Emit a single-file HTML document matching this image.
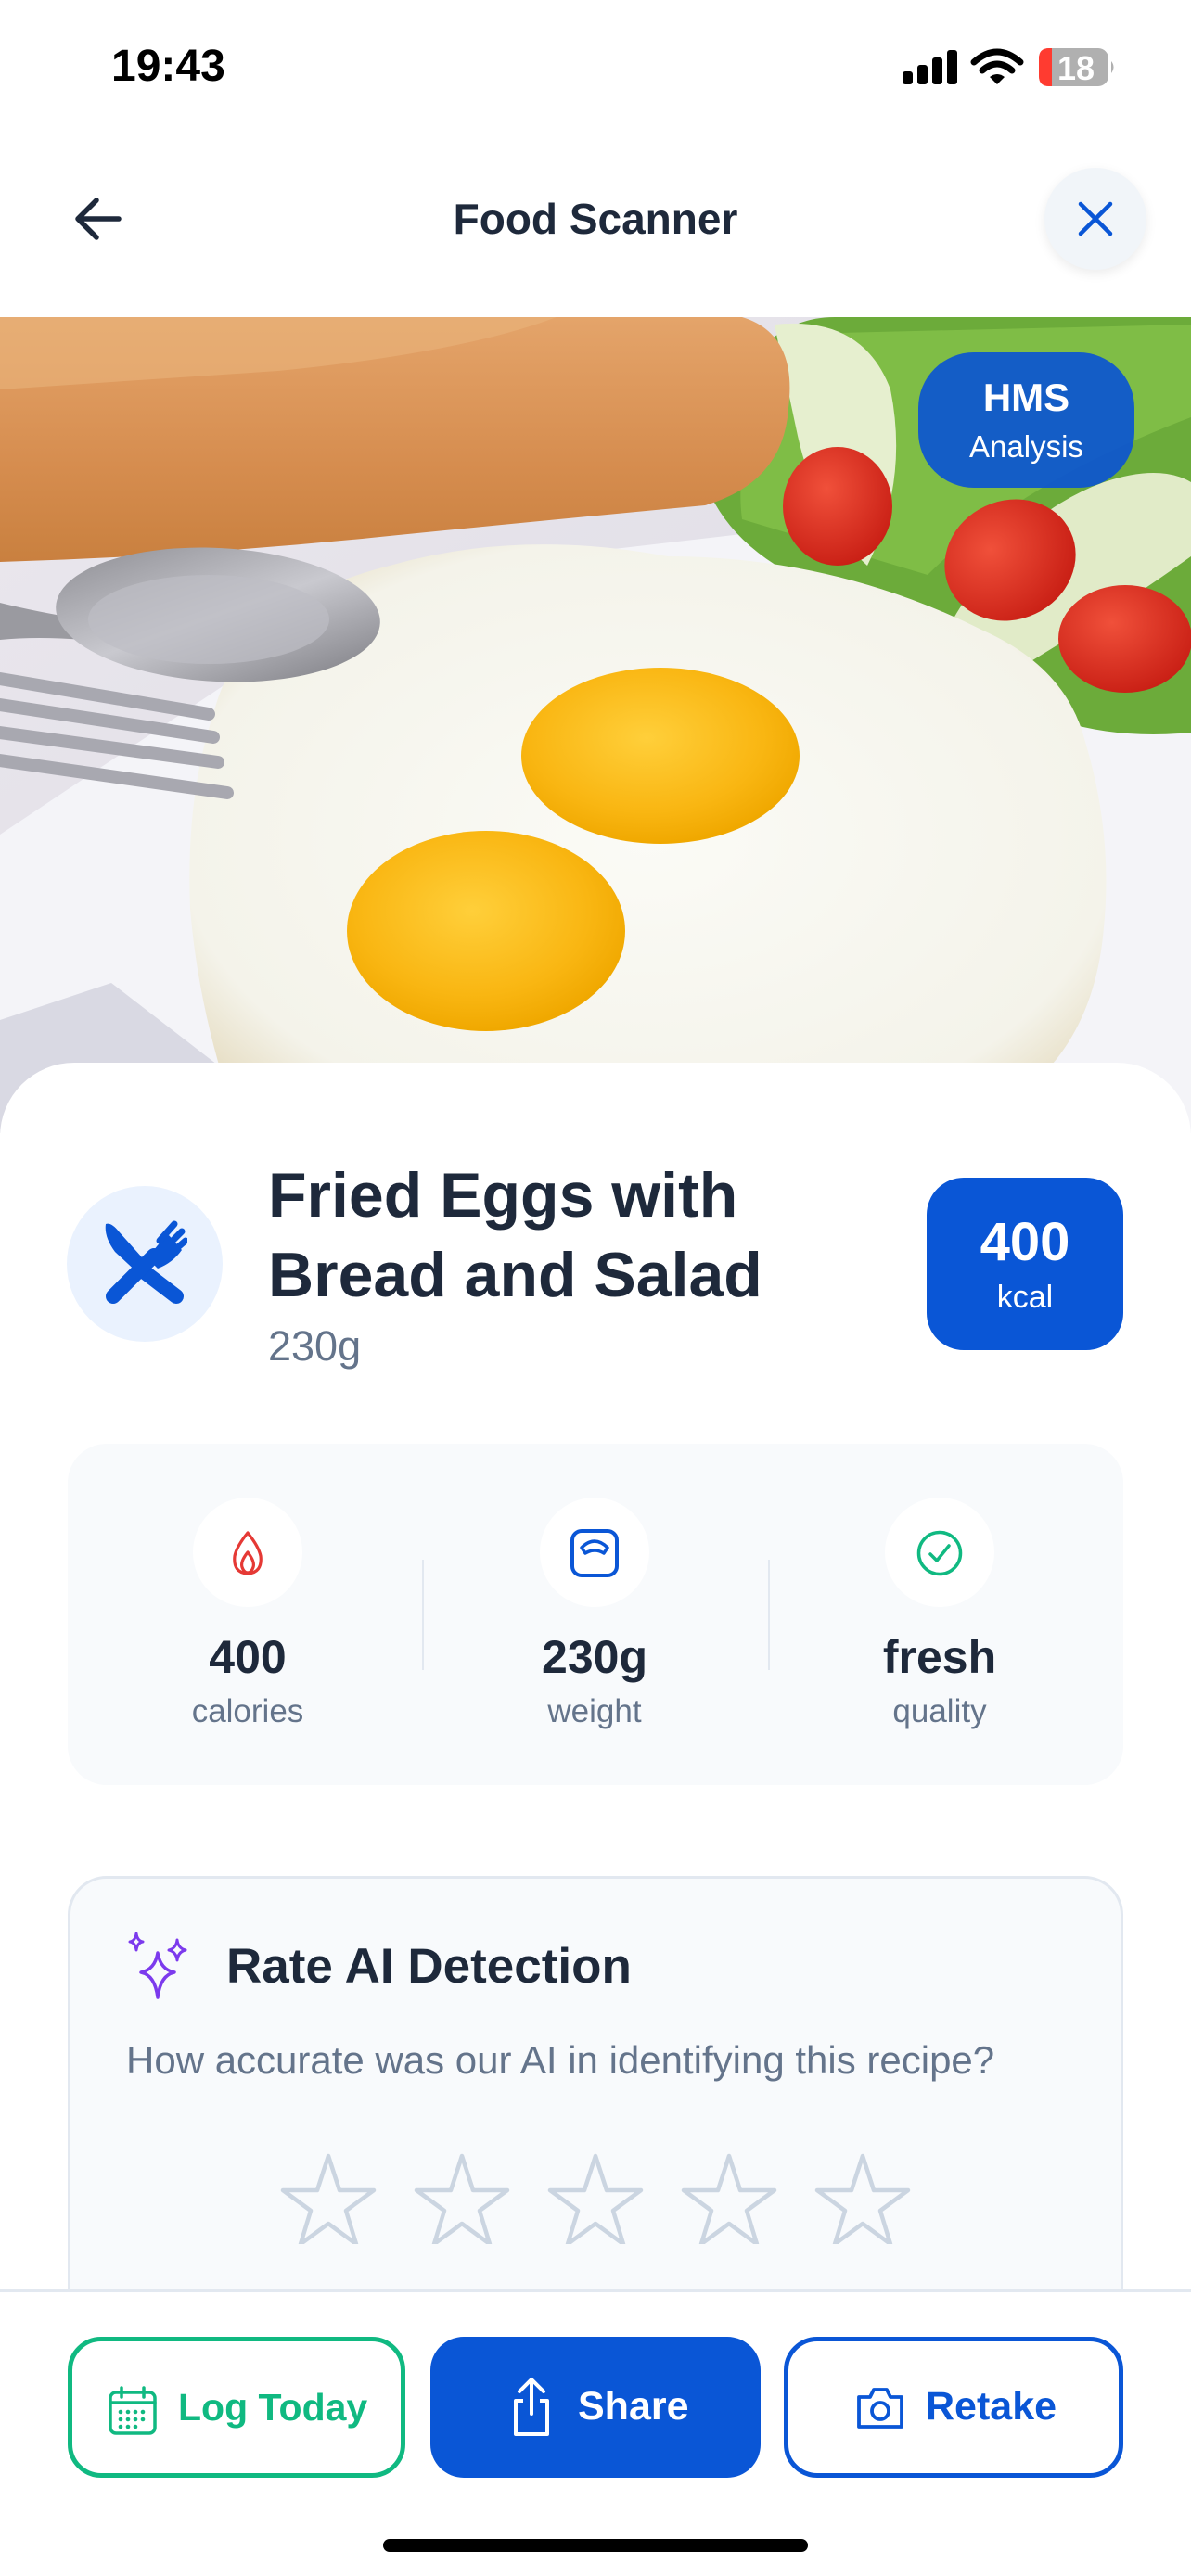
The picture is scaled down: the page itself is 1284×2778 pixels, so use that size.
<!DOCTYPE html>
<html><head><meta charset="utf-8">
<style>
*{margin:0;padding:0;box-sizing:border-box}
body{width:1284px;height:2778px;position:relative;overflow:hidden;background:#fff;font-family:"Liberation Sans",sans-serif;color:#1e293b}
.a{position:absolute}
.t{white-space:nowrap}
</style></head><body>

<!-- status bar -->
<div class="a t" style="left:120px;top:44px;font-size:48px;font-weight:700;color:#000">19:43</div>
<svg class="a" style="left:970px;top:50px" width="240" height="46" viewBox="970 50 240 46">
  <rect x="973" y="77" width="11" height="14" rx="3"/>
  <rect x="989" y="70" width="11" height="21" rx="3"/>
  <rect x="1005" y="62" width="11" height="29" rx="3"/>
  <rect x="1021" y="54" width="11" height="37" rx="3"/>
  <path d="M1050 67 Q1075 45 1100 67" stroke="#000" stroke-width="7" fill="none" stroke-linecap="round"/>
  <path d="M1059 76 Q1075 62 1091 76" stroke="#000" stroke-width="7" fill="none" stroke-linecap="round"/>
  <path d="M1067 83 L1075 91 L1083 83 Q1075 77 1067 83Z"/>
  <rect x="1120" y="52" width="75" height="41" rx="11" fill="#b0b0b0"/>
  <path d="M1131 52 H1134 V93 H1131 Q1120 93 1120 82 V63 Q1120 52 1131 52Z" fill="#ff3b30"/>
  <path d="M1198 66 Q1203 72 1198 79Z" fill="#b0b0b0"/>
  <text x="1160" y="86" font-size="36" font-weight="700" fill="#fff" text-anchor="middle" font-family="Liberation Sans">18</text>
</svg>

<!-- nav -->
<svg class="a" style="left:78px;top:210px" width="56" height="52" viewBox="0 0 56 52">
  <path d="M50 26 H6 M26 6 L6 26 L26 46" stroke="#1e293b" stroke-width="5.5" fill="none" stroke-linecap="round" stroke-linejoin="round"/>
</svg>
<div class="a t" style="left:0;width:1284px;text-align:center;top:209px;font-size:46px;font-weight:700;color:#1e293b">Food Scanner</div>
<div class="a" style="left:1126px;top:181px;width:110px;height:110px;border-radius:55px;background:#f1f5f9;box-shadow:0 4px 12px rgba(0,0,0,0.08)"></div>
<svg class="a" style="left:1160px;top:215px" width="42" height="42" viewBox="0 0 42 42">
  <path d="M5 5 L37 37 M37 5 L5 37" stroke="#0a56d6" stroke-width="4.5" stroke-linecap="round"/>
</svg>

<!-- food photo -->
<svg class="a" style="left:0;top:342px" width="1284" height="880" viewBox="0 342 1284 880">
  <defs>
    <linearGradient id="bg" x1="0" y1="0" x2="1" y2="1">
      <stop offset="0" stop-color="#ece8ee"/><stop offset="1" stop-color="#d8d8e2"/>
    </linearGradient>
    <linearGradient id="bread" x1="0" y1="0" x2="0" y2="1">
      <stop offset="0" stop-color="#e4a46a"/><stop offset="0.6" stop-color="#d68d4f"/><stop offset="1" stop-color="#c9803f"/>
    </linearGradient>
    <radialGradient id="yolk" cx="0.45" cy="0.4" r="0.6">
      <stop offset="0" stop-color="#ffcf3a"/><stop offset="0.7" stop-color="#f9b612"/><stop offset="1" stop-color="#f0a800"/>
    </radialGradient>
    <radialGradient id="white" cx="0.5" cy="0.5" r="0.6">
      <stop offset="0" stop-color="#fbfbf6"/><stop offset="0.85" stop-color="#f4f3ea"/><stop offset="1" stop-color="#e8e0c8"/>
    </radialGradient>
    <radialGradient id="tom" cx="0.4" cy="0.35" r="0.7">
      <stop offset="0" stop-color="#f0503a"/><stop offset="1" stop-color="#c81e14"/>
    </radialGradient>
    <linearGradient id="spoon" x1="0" y1="0" x2="1" y2="1">
      <stop offset="0" stop-color="#8a8a90"/><stop offset="0.5" stop-color="#c9c9cf"/><stop offset="1" stop-color="#77777d"/>
    </linearGradient>
  </defs>
  <rect x="0" y="342" width="1284" height="880" fill="url(#bg)"/>
  <path d="M0 900 L420 620 L1284 520 L1284 1222 L0 1222Z" fill="#f4f4f8"/>
  <path d="M0 1100 L120 1060 L330 1222 L0 1222Z" fill="#d9d9e3"/>
  <path d="M760 520 Q740 440 800 400 Q840 342 900 342 L1284 342 L1284 790 Q1180 800 1100 760 Q980 700 900 640 Q790 600 760 520Z" fill="#6cab3a"/>
  <path d="M800 560 Q790 480 840 440 Q880 400 860 360 L1284 350 L1284 450 Q1100 520 1000 620 Z" fill="#85c24a" opacity="0.8"/>
  <path d="M835 350 Q930 340 960 420 Q980 520 935 610 Q880 560 860 470 Q845 400 835 350Z" fill="#e6efcf"/>
  <path d="M1010 700 Q1080 560 1190 520 Q1250 500 1284 520 L1284 600 Q1200 660 1100 720Z" fill="#e1ebc8"/>
  <ellipse cx="903" cy="546" rx="59" ry="64" fill="url(#tom)"/>
  <ellipse cx="1089" cy="604" rx="72" ry="64" fill="url(#tom)" transform="rotate(-25 1089 604)"/>
  <ellipse cx="1213" cy="689" rx="72" ry="58" fill="url(#tom)"/>
  <path d="M0 342 L800 342 Q860 360 850 440 Q845 520 760 545 Q600 560 400 580 Q200 600 0 606Z" fill="url(#bread)"/>
  <path d="M0 342 L600 342 Q500 380 300 400 Q150 410 0 420Z" fill="#eab47c" opacity="0.6"/>
  <path d="M230 770 Q260 650 420 610 Q560 570 720 600 Q900 600 1060 680 Q1150 720 1170 800 Q1200 900 1190 1000 Q1180 1120 1100 1180 L1000 1222 L260 1222 Q215 1100 205 980 Q200 860 230 770Z" fill="url(#white)"/>
  <ellipse cx="712" cy="815" rx="150" ry="95" fill="url(#yolk)"/>
  <ellipse cx="524" cy="1004" rx="150" ry="108" fill="url(#yolk)"/>
  <path d="M0 650 Q40 660 90 668 L90 690 Q40 686 0 690Z" fill="#9a9aa0"/>
  <ellipse cx="235" cy="663" rx="175" ry="72" fill="url(#spoon)" transform="rotate(3 235 663)"/>
  <ellipse cx="225" cy="668" rx="130" ry="48" fill="#bdbdc4" opacity="0.7"/>
  <g stroke="#a8a8b0" stroke-width="14" stroke-linecap="round">
    <path d="M0 732 L225 770"/><path d="M0 760 L230 795"/><path d="M0 790 L235 822"/><path d="M0 820 L245 855"/>
  </g>
</svg>
<div class="a" style="left:990px;top:380px;width:233px;height:146px;border-radius:60px;background:#0c55d0;opacity:0.93"></div>
<div class="a t" style="left:990px;width:233px;text-align:center;top:405px;font-size:42px;font-weight:700;color:#fff">HMS</div>
<div class="a t" style="left:990px;width:233px;text-align:center;top:463px;font-size:33px;color:#fff">Analysis</div>

<!-- card -->
<div class="a" style="left:0;top:1146px;width:1284px;height:1400px;background:#fff;border-radius:80px 80px 0 0"></div>

<div class="a" style="left:72px;top:1279px;width:168px;height:168px;border-radius:84px;background:#eaf2fe"></div>
<svg class="a" style="left:108px;top:1314px" width="94" height="94" viewBox="0 0 94 94">
  <!-- knife -->
  <path d="M6 6 Q4 20 16 36 L44 62 L54 52 L20 14 Q12 4 6 6Z" fill="#0a56d6"/>
  <path d="M48 58 L82 84" stroke="#0a56d6" stroke-width="16" stroke-linecap="round"/>
  <!-- fork -->
  <path d="M58 40 L14 84" stroke="#0a56d6" stroke-width="16" stroke-linecap="round"/>
  <path d="M52 44 Q60 28 74 18 L88 34 Q78 48 62 54Z" fill="#0a56d6"/>
  <path d="M64 24 L80 6 M72 30 L88 14 M78 36 L92 24" stroke="#0a56d6" stroke-width="7" stroke-linecap="round"/>
</svg>

<div class="a t" style="left:289px;top:1246px;font-size:68px;font-weight:700;color:#1e293b;line-height:86px">Fried Eggs with<br>Bread and Salad</div>
<div class="a t" style="left:289px;top:1426px;font-size:45px;color:#64748b">230g</div>

<div class="a" style="left:999px;top:1270px;width:212px;height:186px;border-radius:40px;background:#0a56d6"></div>
<div class="a t" style="left:999px;width:212px;text-align:center;top:1306px;font-size:58px;font-weight:700;color:#fff">400</div>
<div class="a t" style="left:999px;width:212px;text-align:center;top:1380px;font-size:34px;color:#fff">kcal</div>

<!-- stats -->
<div class="a" style="left:73px;top:1557px;width:1138px;height:368px;border-radius:42px;background:#f8fafc"></div>
<div class="a" style="left:208px;top:1615px;width:118px;height:118px;border-radius:59px;background:#fff"></div>
<div class="a" style="left:582px;top:1615px;width:118px;height:118px;border-radius:59px;background:#fff"></div>
<div class="a" style="left:954px;top:1615px;width:118px;height:118px;border-radius:59px;background:#fff"></div>
<svg class="a" style="left:247px;top:1650px" width="40" height="50" viewBox="0 0 40 50">
  <path d="M20 3 Q8 18 6 28 Q4 46 20 47 Q36 46 34 28 Q32 18 20 3Z M20 24 Q12 34 14 40 Q16 46 20 46 Q24 46 26 40 Q28 34 20 24Z" stroke="#e53935" stroke-width="3.2" fill="none" stroke-linejoin="round"/>
</svg>
<svg class="a" style="left:613px;top:1647px" width="56" height="56" viewBox="0 0 56 56">
  <rect x="4" y="4" width="48" height="48" rx="10" stroke="#0a56d6" stroke-width="4" fill="none"/>
  <path d="M14 22 Q28 8 42 22 L38 28 Q28 22 18 28Z" stroke="#0a56d6" stroke-width="3.5" fill="none" stroke-linejoin="round"/>
</svg>
<svg class="a" style="left:986px;top:1648px" width="54" height="54" viewBox="0 0 54 54">
  <circle cx="27" cy="27" r="22.5" stroke="#10b981" stroke-width="3.5" fill="none"/>
  <path d="M17 28 L24 35 L37 19" stroke="#10b981" stroke-width="3.5" fill="none" stroke-linecap="round" stroke-linejoin="round"/>
</svg>
<div class="a" style="left:455px;top:1682px;width:2px;height:119px;background:#e2e8f0"></div>
<div class="a" style="left:828px;top:1682px;width:2px;height:119px;background:#e2e8f0"></div>
<div class="a t" style="left:117px;width:300px;text-align:center;top:1758px;font-size:50px;font-weight:700">400</div>
<div class="a t" style="left:491px;width:300px;text-align:center;top:1758px;font-size:50px;font-weight:700">230g</div>
<div class="a t" style="left:863px;width:300px;text-align:center;top:1758px;font-size:50px;font-weight:700">fresh</div>
<div class="a t" style="left:117px;width:300px;text-align:center;top:1826px;font-size:35px;color:#64748b">calories</div>
<div class="a t" style="left:491px;width:300px;text-align:center;top:1826px;font-size:35px;color:#64748b">weight</div>
<div class="a t" style="left:863px;width:300px;text-align:center;top:1826px;font-size:35px;color:#64748b">quality</div>

<!-- rate card -->
<div class="a" style="left:73px;top:2023px;width:1138px;height:600px;border-radius:42px;background:#f8fafc;border:3px solid #e2e8f0"></div>
<svg class="a" style="left:132px;top:2080px" width="80" height="80" viewBox="0 0 80 80">
  <path d="M38 26 Q41 44 56 47 Q41 50 38 74 Q35 50 20 47 Q35 44 38 26Z" stroke="#7c3aed" stroke-width="3.5" fill="none" stroke-linejoin="round"/>
  <path d="M15 5 Q16 13 22 14 Q16 15 15 23 Q14 15 8 14 Q14 13 15 5Z" stroke="#7c3aed" stroke-width="3" fill="none" stroke-linejoin="round"/>
  <path d="M59 12 Q60 21 68 23 Q60 25 59 34 Q58 25 50 23 Q58 21 59 12Z" stroke="#7c3aed" stroke-width="3" fill="none" stroke-linejoin="round"/>
</svg>
<div class="a t" style="left:244px;top:2090px;font-size:53px;font-weight:600;color:#1e293b">Rate AI Detection</div>
<div class="a t" style="left:136px;top:2198px;font-size:42px;color:#64748b">How accurate was our AI in identifying this recipe?</div>
<svg class="a" style="left:300px;top:2310px" width="690" height="110" viewBox="300 2310 690 110">
  <g stroke="#cbd5e1" stroke-width="4.5" fill="none" stroke-linejoin="round">
    <path id="st" d="M354 2325 L366 2362 L403 2362 L373 2384 L384 2420 L354 2398 L324 2420 L335 2384 L305 2362 L342 2362Z"/>
    <use href="#st" x="144"/><use href="#st" x="288"/><use href="#st" x="432"/><use href="#st" x="576"/>
  </g>
</svg>

<!-- bottom bar -->
<div class="a" style="left:0;top:2469px;width:1284px;height:309px;background:#fff;border-top:3px solid #e2e8f0"></div>
<div class="a" style="left:73px;top:2520px;width:364px;height:152px;border-radius:36px;border:5px solid #10b981"></div>
<div class="a" style="left:464px;top:2520px;width:356px;height:152px;border-radius:36px;background:#0a56d6"></div>
<div class="a" style="left:845px;top:2520px;width:366px;height:152px;border-radius:36px;border:5px solid #0a56d6"></div>
<svg class="a" style="left:116px;top:2573px" width="54" height="54" viewBox="0 0 54 54">
  <rect x="3" y="7" width="48" height="44" rx="6" stroke="#10b981" stroke-width="3.5" fill="none"/>
  <path d="M3 18 H51 M15 2 V12 M39 2 V12" stroke="#10b981" stroke-width="3.5" stroke-linecap="round"/>
  <g fill="#10b981"><circle cx="14" cy="28" r="2.3"/><circle cx="22" cy="28" r="2.3"/><circle cx="30" cy="28" r="2.3"/><circle cx="38" cy="28" r="2.3"/><circle cx="14" cy="36" r="2.3"/><circle cx="22" cy="36" r="2.3"/><circle cx="30" cy="36" r="2.3"/><circle cx="38" cy="36" r="2.3"/><circle cx="14" cy="44" r="2.3"/><circle cx="22" cy="44" r="2.3"/><circle cx="30" cy="44" r="2.3"/></g>
</svg>
<div class="a t" style="left:192px;top:2573px;font-size:41px;font-weight:700;color:#10b981">Log Today</div>
<svg class="a" style="left:550px;top:2563px" width="46" height="66" viewBox="0 0 46 66">
  <path d="M23 4 V40 M10 16 L23 3 L36 16" stroke="#fff" stroke-width="4" fill="none" stroke-linecap="round" stroke-linejoin="round"/>
  <path d="M14 26 H6 V62 H40 V26 H32" stroke="#fff" stroke-width="4" fill="none" stroke-linejoin="round"/>
</svg>
<div class="a t" style="left:623px;top:2571px;font-size:43px;font-weight:700;color:#fff">Share</div>
<svg class="a" style="left:922px;top:2571px" width="54" height="50" viewBox="0 0 54 50">
  <path d="M4 14 H16 L20 6 H34 L38 14 H50 V46 H4Z" stroke="#0a56d6" stroke-width="3.8" fill="none" stroke-linejoin="round"/>
  <circle cx="27" cy="29" r="9" stroke="#0a56d6" stroke-width="3.8" fill="none"/>
</svg>
<div class="a t" style="left:998px;top:2571px;font-size:43px;font-weight:700;color:#0a56d6">Retake</div>

<div class="a" style="left:413px;top:2738px;width:458px;height:14px;border-radius:7px;background:#000"></div>
</body></html>
